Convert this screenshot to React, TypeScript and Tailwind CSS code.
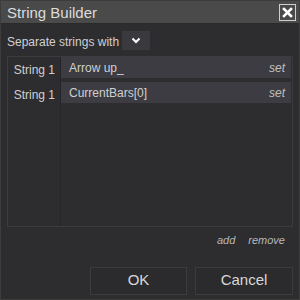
import React from "react";

export default function App() {
  const rows = [
    { label: "String 1", value: "Arrow up_" },
    { label: "String 1", value: "CurrentBars[0]" },
  ];
  return (
    <div
      className="w-[300px] h-[300px] bg-[#2d2d30] border border-[#3c3c3c] flex flex-col text-[#d0d0d0]"
      style={{ fontFamily: '"Liberation Sans", Arial, sans-serif' }}
    >
      <div className="h-[23px] bg-[#4a4a4a] flex items-center justify-between pl-[6px] pr-[3px] border-b border-[#2a2a2a]">
        <span className="text-[15px] text-[#dcdcdc] leading-none">String Builder</span>
        <div className="w-[17px] h-[17px] border border-[#cfcfcf] flex items-center justify-center">
          <svg width="11" height="11" viewBox="0 0 11 11">
            <path d="M2 2 L9 9 M9 2 L2 9" stroke="#ffffff" strokeWidth="2.6" strokeLinecap="square" />
          </svg>
        </div>
      </div>
      <div className="flex flex-col px-[6px]">
        <div className="flex items-center mt-[6px] h-[20px]">
          <span className="text-[12px] leading-none mt-[3px]">Separate strings with</span>
          <div className="ml-[3px] w-[28px] h-[19px] bg-[#3a3a3e] flex items-center justify-center">
            <svg width="10" height="7" viewBox="0 0 10 7">
              <path d="M1.5 1.5 L5 5 L8.5 1.5" stroke="#ffffff" strokeWidth="2" fill="none" />
            </svg>
          </div>
        </div>
        <div className="mt-[6px] h-[171px] border border-[#3c3c3e] flex">
          <div className="w-[52px] flex flex-col">
            {rows.map((r, i) => (
              <div key={i} className="h-[25px] flex items-center justify-end pr-[5px] text-[12px]">
                {r.label}
              </div>
            ))}
          </div>
          <div className="flex-1 flex flex-col border-l border-[#26262a] pr-[1px]">
            {rows.map((r, i) => (
              <div
                key={i}
                className="h-[21px] mb-[4px] bg-[#3c3c42] flex items-center justify-between pl-[8px] pr-[6px] text-[12px]"
              >
                <span>{r.value}</span>
                <span className="italic text-[12px] text-[#c0c0c0]">set</span>
              </div>
            ))}
          </div>
        </div>
        <div className="flex justify-end gap-[13px] pr-[8px] mt-[5px] text-[11px] italic text-[#b8b8b8]">
          <span>add</span>
          <span>remove</span>
        </div>
        <div className="flex justify-end gap-[8px] mt-[18px]">
          <button className="w-[97px] h-[28px] border border-[#3c3c3c] bg-[#2b2b2d] text-[15px] text-[#d8d8d8]">
            OK
          </button>
          <button className="w-[98px] h-[28px] border border-[#3c3c3c] bg-[#2b2b2d] text-[15px] text-[#d8d8d8]">
            Cancel
          </button>
        </div>
      </div>
    </div>
  );
}
